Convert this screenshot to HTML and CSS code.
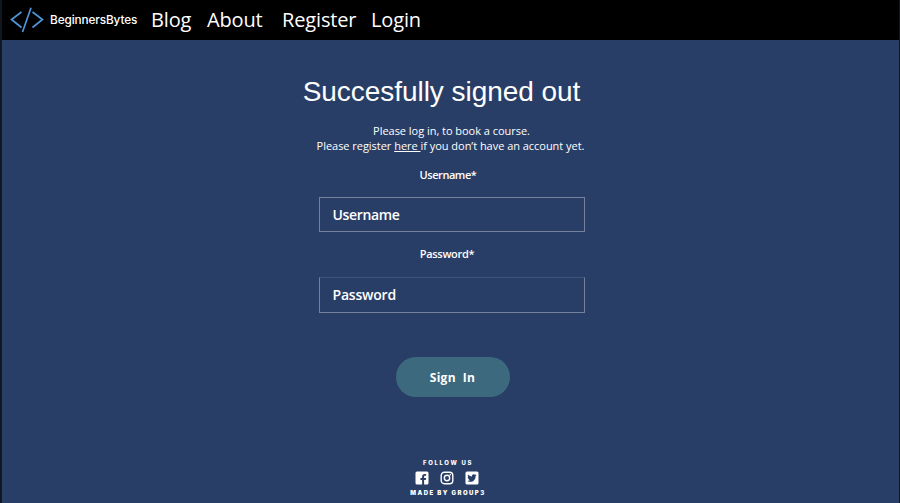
FILE: index.html
```html
<!DOCTYPE html>
<html lang="en">
<head>
<meta charset="utf-8">
<title>BeginnersBytes</title>
<link rel="stylesheet" href="styles.css">
</head>
<body>
<header class="navbar">
  <svg class="logo" viewBox="0 0 34 26" fill="none" stroke="#4e96dc" stroke-width="1.7"><path d="M11.5 5 1.5 12.5 11.5 20.5M22.5 5l10 7.5-10 8M21 .8 12.5 25"/></svg>
  <span class="brand">BeginnersBytes</span>
  <nav class="links"><a class="blog">Blog</a><a class="about">About</a><a class="register">Register</a><a class="login">Login</a></nav>
</header>
<main class="content">
  <h1>Succesfully signed out</h1>
  <p class="intro">Please log in, to book a course.</p>
  <p class="intro signup">Please register <a class="here">here </a>if you don’t have an account yet.</p>
  <form class="form">
    <label class="label user-label">Username*</label>
    <div class="field user-field">Username</div>
    <label class="label pass-label">Password*</label>
    <div class="field pass-field">Password</div>
    <div class="button"><span>Sign In</span></div>
  </form>
</main>
<footer class="footer">
  <div class="follow">FOLLOW US</div>
  <div class="social">
    <svg viewBox="0 0 14 14"><rect x=".5" y=".5" width="13" height="13" rx="1.5" fill="#fff"/><path d="M7.1 14V9H5.400V7h1.700V5.500c0-1.800 1-2.600 2.600-2.600h1.400v1.800h-1c-.8 0-1 .4-1 1V7h2l-.3 2H9.100v5z" fill="#293e66"/></svg>
    <svg viewBox="0 0 14 14" fill="none" stroke="#fff" stroke-width="1.4"><rect x="1.200" y="1.200" width="11.600" height="11.600" rx="3.200"/><circle cx="7" cy="7" r="2.700"/><circle cx="10.300" cy="3.700" r=".8" fill="#fff" stroke="none"/></svg>
    <svg viewBox="0 0 14 14"><rect x=".5" y=".5" width="13" height="13" rx="1.5" fill="#fff"/><path d="M11.600 4.100l-1 .9c.1 3.500-2.300 5.800-5.200 5.800-1.100 0-2.200-.3-3-.9 1 .1 2-.2 2.700-.8-.8 0-1.500-.6-1.700-1.300h.8c-.9-.2-1.500-1-1.500-1.900l.8.2c-.8-.6-1-1.700-.5-2.500C4 4.700 5.400 5.400 7 5.500c-.3-1.400.7-2.300 1.800-2.300.5 0 1 .2 1.300.6l1.200-.5-.8 1z" fill="#293e66"/></svg>
  </div>
  <div class="made">MADE BY GROUP3</div>
</footer>
</body>
</html>
```
FILE: styles.css
```css
* { box-sizing: border-box; }
body {
  margin: 0;
  width: 900px;
  height: 503px;
  overflow: hidden;
  display: flex;
  flex-direction: column;
  background: #293e66;
  border-left: 2px solid #10171f;
  border-right: 1px solid #10171f;
  color: #fff;
  font-family: "Open Sans", sans-serif;
}
.navbar {
  height: 40px;
  flex: none;
  display: flex;
  align-items: center;
  background: #000;
  padding-left: 8px;
}
.logo { width: 34px; height: 26px; }
.brand {
  width: 101px;
  margin-left: 6px;
  font: 500 11.8px/20px "Inter", sans-serif;
  letter-spacing: -0.12px;
}
.links {
  display: flex;
  font-size: 20px;
  font-weight: 450;
  line-height: 40px;
  letter-spacing: -0.15px;
  white-space: nowrap;
}
.blog { width: 56px; }
.about { width: 75px; }
.register { width: 89px; }
.content { display: flex; flex-direction: column; align-items: center; padding-left: 2px; }
h1 {
  margin: 35px 20px 0 0;
  font: 400 28px/34px "Liberation Sans", sans-serif;
  letter-spacing: -0.04px;
  white-space: nowrap;
}
.intro {
  margin: 14px 0 0;
  font-size: 11px;
  line-height: 15px;
  font-weight: 500;
  letter-spacing: -0.03px;
  white-space: nowrap;
}
.signup { margin: 0 2px 0 0; }
.here { text-decoration: underline; }
.form { width: 266px; display: flex; flex-direction: column; }
.label {
  height: 15px;
  font-size: 11px;
  line-height: 15px;
  font-weight: 600;
  letter-spacing: -0.45px;
  text-align: center;
}
.user-label { margin: 14px 7px 15px 0; }
.pass-label { margin: 14px 9px 16px 0; letter-spacing: -0.3px; }
.field {
  height: 35px;
  padding-left: 13px;
  border: 1px solid #73819c;
  font-size: 14px;
  line-height: 33px;
  font-weight: 600;
  letter-spacing: -0.35px;
}
.pass-field { height: 36px; border-top-color: #40547a; letter-spacing: -0.2px; }
.button {
  width: 114px;
  height: 40px;
  margin: 44px 0 0 77px;
  border-radius: 20px;
  background: #3d697f;
  display: flex;
  align-items: center;
  justify-content: center;
  font-size: 12px;
  font-weight: 700;
  letter-spacing: 0.3px;
  word-spacing: 3.5px;
}
.footer {
  width: 100px;
  margin: 62px 0 0 395px;
  display: flex;
  flex-direction: column;
  align-items: center;
  font: 800 6px/8px "Inter", sans-serif;
  white-space: nowrap;
}
.follow { padding-left: 2px; letter-spacing: 1.65px; }
.social { display: flex; gap: 11px; margin: 4px 0; }
.social svg { width: 14px; height: 14px; }
.made { padding-left: 2px; font-weight: 900; letter-spacing: 1.45px; }
```
